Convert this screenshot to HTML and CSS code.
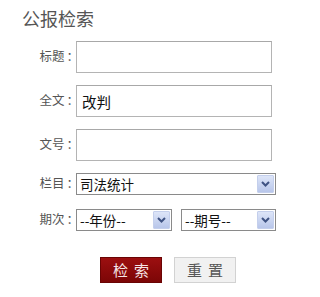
FILE: index.html
```html
<!DOCTYPE html>
<html lang="zh-CN">
<head>
<meta charset="utf-8">
<title>公报检索</title>
<link rel="stylesheet" href="styles.css">
</head>
<body>
<div class="page">
  <h1 class="title">公报检索</h1>
  <form class="form">
    <div class="row row-text first">
      <label class="lbl">标题<span class="colon">：</span></label>
      <input class="txt" type="text">
    </div>
    <div class="row row-text">
      <label class="lbl">全文<span class="colon">：</span></label>
      <input class="txt" type="text" value="改判">
    </div>
    <div class="row row-text">
      <label class="lbl">文号<span class="colon">：</span></label>
      <input class="txt" type="text">
    </div>
    <div class="row row-sel">
      <label class="lbl">栏目<span class="colon">：</span></label>
      <div class="sel sel-wide">
        <span class="sel-text">司法统计</span>
        <span class="arrow"><svg viewBox="0 0 9 6" width="9" height="6"><path d="M1 1 L4.5 4.5 L8 1" fill="none" stroke="#3f5383" stroke-width="2"/></svg></span>
      </div>
    </div>
    <div class="row row-sel row-period">
      <label class="lbl">期次<span class="colon">：</span></label>
      <div class="sel sel-year">
        <span class="sel-text">--年份--</span>
        <span class="arrow"><svg viewBox="0 0 9 6" width="9" height="6"><path d="M1 1 L4.5 4.5 L8 1" fill="none" stroke="#3f5383" stroke-width="2"/></svg></span>
      </div>
      <div class="sel sel-issue">
        <span class="sel-text">--期号--</span>
        <span class="arrow"><svg viewBox="0 0 9 6" width="9" height="6"><path d="M1 1 L4.5 4.5 L8 1" fill="none" stroke="#3f5383" stroke-width="2"/></svg></span>
      </div>
    </div>
    <div class="btns">
      <button type="button" class="btn btn-search"><span class="btn-label">检索</span></button>
      <button type="button" class="btn btn-reset"><span class="btn-label">重置</span></button>
    </div>
  </form>
</div>
</body>
</html>
```
FILE: styles.css
```css
html, body {
  margin: 0;
  padding: 0;
  background: #ffffff;
}
body {
  font-family: "Noto Sans CJK SC", "Noto Sans", sans-serif;
  color: #555;
}
.page {
  padding: 9px 0 0 0;
}
.title {
  margin: 0 0 0 22px;
  font-size: 18px;
  line-height: 18px;
  font-weight: normal;
  color: #555;
}
.form {
  display: flex;
  flex-direction: column;
  margin-top: 14px;
}
.row {
  display: flex;
  align-items: center;
}
.row-text {
  height: 32px;
  margin-bottom: 11px;
}
.row-text + .row-text {
  margin-top: 1px;
}
.row-sel {
  height: 22px;
  margin-top: 1px;
}
.row-period {
  margin-top: 14px;
}
.lbl {
  width: 76px;
  flex: none;
  text-align: right;
  font-size: 12.5px;
  line-height: 14px;
  color: #555;
  padding-bottom: 2px;
  white-space: nowrap;
}
.colon {
  margin-left: 2px;
  margin-right: -3px;
}
.txt {
  box-sizing: border-box;
  width: 196px;
  height: 32px;
  margin: 0;
  border: 1px solid #b4b4b4;
  border-top-color: #a8a8a8;
  background: #fff;
  padding: 0 5px;
  font-family: "Noto Sans CJK SC", sans-serif;
  font-size: 14.5px;
  color: #111;
  outline: none;
}
.sel {
  box-sizing: border-box;
  height: 22px;
  border: 1px solid #8a8a8a;
  background: #fff;
  display: flex;
  align-items: stretch;
  padding: 1px;
}
.sel-wide { width: 200px; }
.sel-year { width: 96px; }
.sel-issue { width: 95px; margin-left: 9px; }
.sel-text {
  flex: 1;
  font-size: 13.5px;
  line-height: 18px;
  color: #111;
  padding-left: 2px;
  white-space: nowrap;
  overflow: hidden;
}
.arrow {
  box-sizing: border-box;
  width: 17px;
  flex: none;
  border: 1px solid #c4cfec;
  border-radius: 1px;
  background: linear-gradient(#dde5f8, #b8c6ea);
  display: flex;
  align-items: center;
  justify-content: center;
}
.btns {
  display: flex;
  gap: 12px;
  margin-top: 26px;
  padding-left: 100px;
}
.btn {
  box-sizing: border-box;
  width: 62px;
  height: 26px;
  margin: 0;
  padding: 0;
  font-family: "Noto Sans CJK SC", sans-serif;
  font-size: 15px;
  line-height: 24px;
  cursor: pointer;
}
.btn-label {
  letter-spacing: 6px;
  margin-right: -6px;
}
.btn-search {
  background: linear-gradient(#9c0f10, #7c0606);
  border: 1px solid #6a0404;
  color: #f6e6e6;
}
.btn-reset {
  background: #f1f1f1;
  border: 1px solid #d2d2d2;
  color: #555;
}
```
